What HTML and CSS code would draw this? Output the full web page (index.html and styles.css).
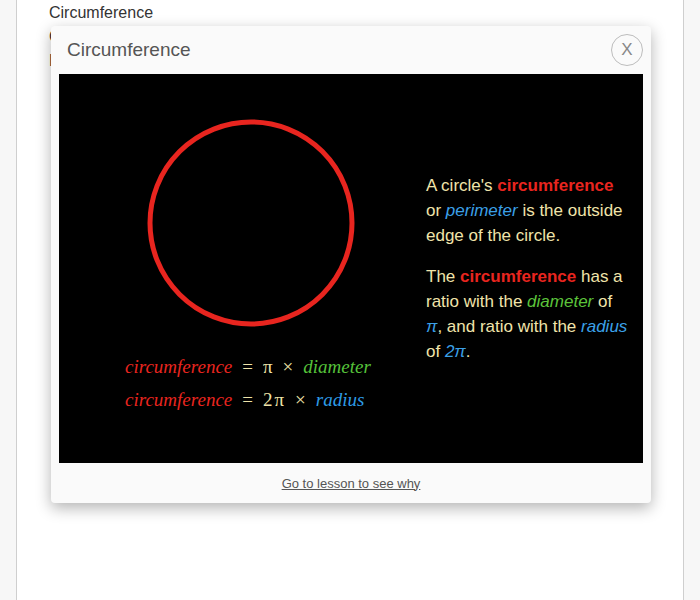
FILE: index.html
```html
<!DOCTYPE html>
<html>
<head>
<meta charset="utf-8">
<link rel="stylesheet" href="styles.css">
</head>
<body>
<div class="page">
  <div class="line">Circumference</div>
  <div class="line">Circle</div>
  <div class="line">Diameter</div>
</div>
<div class="modal">
  <div class="modal-head">
    <div class="modal-title">Circumference</div>
    <div class="close">X</div>
  </div>
  <div class="panel">
    <div class="left">
      <svg class="circle" width="210" height="210" viewBox="0 0 210 210">
        <circle cx="105" cy="105" r="101" fill="none" stroke="#e8251f" stroke-width="5"/>
      </svg>
      <div class="eqs">
        <div class="eq"><span class="red">circumference</span><span class="sym">=</span><span class="sym">π</span><span class="sym">×</span><span class="green">diameter</span></div>
        <div class="eq"><span class="red">circumference</span><span class="sym">=</span><span class="sym two">2π</span><span class="sym">×</span><span class="blue">radius</span></div>
      </div>
    </div>
    <div class="right">
      <p>A circle's <b class="r">circumference</b> or <i class="b">perimeter</i> is the outside edge of the circle.</p>
      <p>The <b class="r">circumference</b> has a ratio with the <i class="g">diameter</i> of <i class="b">π</i>, and ratio with the <i class="b">radius</i> of <i class="b">2π</i>.</p>
    </div>
  </div>
  <div class="modal-foot"><a class="lesson" href="#">Go to lesson to see why</a></div>
</div>
</body>
</html>
```
FILE: styles.css
```css
html, body {
  margin: 0;
  padding: 0;
  background: #f7f7f7;
  font-family: "Liberation Sans", Arial, sans-serif;
}
.page {
  margin-left: 16px;
  height: 600px;
  background: #fff;
  border-left: 1px solid #cfcfcf;
  border-right: 1px solid #cfcfcf;
  padding-left: 32px;
  box-sizing: content-box;
  width: 634px;
}
.line {
  font-size: 16px;
  line-height: 24px;
  color: #333;
  padding-top: 1px;
  height: 23px;
}
.modal {
  position: absolute;
  left: 51px;
  top: 26px;
  width: 600px;
  background: #fafafa;
  border-radius: 4px;
  box-shadow: 0 5px 15px rgba(0,0,0,0.3);
}
.modal-head {
  height: 48px;
  display: flex;
  align-items: center;
  justify-content: space-between;
  padding: 0 8px 0 16px;
}
.modal-title {
  font-size: 19px;
  color: #555;
}
.close {
  width: 30px;
  height: 30px;
  border: 1px solid #bdbdbd;
  border-radius: 50%;
  display: flex;
  align-items: center;
  justify-content: center;
  font-size: 17px;
  color: #888;
  margin-bottom: 1px;
}
.panel {
  margin: 0 8px;
  height: 389px;
  background: #000;
  display: flex;
}
.left {
  width: 367px;
  display: flex;
  flex-direction: column;
  padding-top: 44px;
}
.circle {
  display: block;
  margin-left: 87px;
}
.eqs {
  margin-top: 22px;
  margin-left: 66px;
  font-family: "Liberation Serif", "Times New Roman", serif;
  font-style: italic;
  font-size: 19px;
}
.eq {
  display: flex;
  gap: 10px;
  height: 33px;
  line-height: 33px;
}
.sym {
  font-style: normal;
  color: #efe3a8;
}
.two {
  letter-spacing: 2px;
  margin-right: -1px;
}
.red { color: #e8251f; }
.green { color: #55c23a; }
.blue { color: #2d9be6; }
.right {
  width: 204px;
  padding-top: 99px;
  font-size: 17px;
  line-height: 25px;
  color: #f0e4aa;
}
.right p {
  margin: 0 0 16px 0;
}
.r { color: #e8251f; }
.b { color: #3ba0e8; }
.g { color: #5cc43b; }
.modal-foot {
  height: 40px;
  display: flex;
  align-items: center;
  justify-content: center;
}
.lesson {
  font-size: 13px;
  color: #555;
  text-decoration: underline;
}
```
